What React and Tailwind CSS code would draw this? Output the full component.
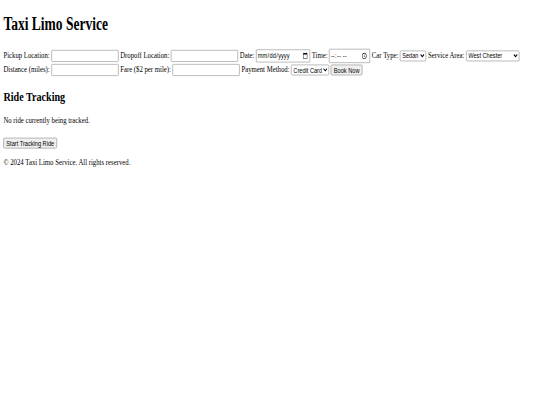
import React from 'react';

const field =
  "align-middle border border-[#767676] rounded-[2px] bg-white px-[2px] py-[2px] my-px font-['Arial','Liberation_Sans',sans-serif] text-[13.3333px] text-black";
const selectCls =
  "align-middle border border-[#767676] rounded-[3px] bg-white font-['Arial','Liberation_Sans',sans-serif] text-[13.3333px] text-black";
const btn =
  "align-middle border border-[#767676] rounded-[3px] bg-[#efefef] px-[6px] py-[1px] font-['Arial','Liberation_Sans',sans-serif] text-[13.3333px] text-black";

const App = () => {
  return (
    <div className="w-[540px] h-[405px] overflow-hidden bg-white">
      {/* page drawn at 1280x720 and squeezed into the window */}
      <div className="w-[1280px] origin-top-left scale-x-[0.421875] scale-y-[0.5625] px-[8px] font-['Liberation_Serif','Times_New_Roman',serif] text-[16px] leading-[normal] text-black">
        <h1 className="text-[32px] font-bold mt-[14px] mb-[23.5px]">Taxi Limo Service</h1>

        <form>
          <label>Pickup Location: </label>
          <input type="text" className={`${field} w-[159px]`} />{' '}
          <label>Dropoff Location: </label>
          <input type="text" className={`${field} w-[159px]`} />{' '}
          <label>Date: </label>
          <input type="date" className={`${field} w-[128px]`} />{' '}
          <label>Time: </label>
          <input type="time" className={`${field} w-[97px]`} />{' '}
          <label>Car Type: </label>
          <select className={`${selectCls} w-[62px]`} defaultValue="Sedan">
            <option>Sedan</option>
            <option>SUV</option>
          </select>{' '}
          <label>Service Area: </label>
          <select className={`${selectCls} w-[126px]`} defaultValue="West Chester">
            <option>West Chester</option>
            <option>Philadelphia</option>
          </select>{' '}
          <label>Distance (miles): </label>
          <input type="number" className={`${field} w-[159px]`} />{' '}
          <label>Fare ($2 per mile): </label>
          <input type="text" readOnly className={`${field} w-[159px]`} />{' '}
          <label>Payment Method: </label>
          <select className={`${selectCls} w-[90px]`} defaultValue="Credit Card">
            <option>Credit Card</option>
            <option>Cash</option>
          </select>{' '}
          <button type="button" className={btn}>Book Now</button>
        </form>

        <div>
          <h2 className="text-[24px] font-bold mt-[22px] mb-[19.92px]">Ride Tracking</h2>
          <p className="mt-[16px] mb-[21px]">No ride currently being tracked.</p>
          <button type="button" className={btn}>Start Tracking Ride</button>
        </div>

        <footer>
          <p className="my-[16px]">© 2024 Taxi Limo Service. All rights reserved.</p>
        </footer>
      </div>
    </div>
  );
};

export default App;
